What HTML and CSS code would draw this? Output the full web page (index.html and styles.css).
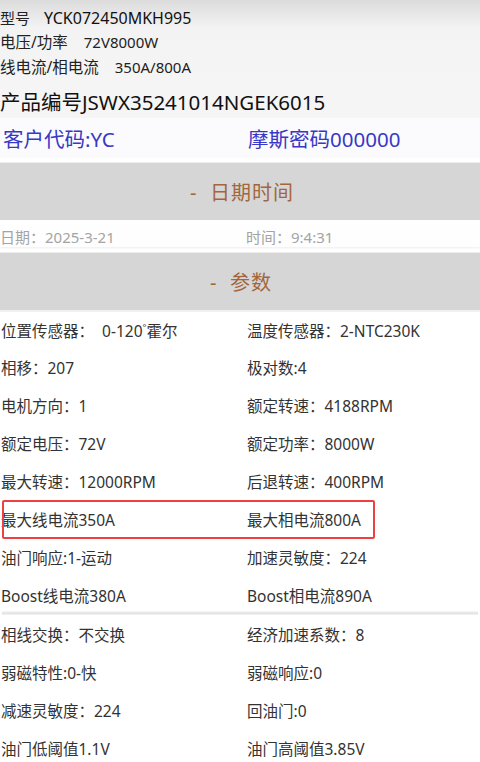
FILE: index.html
```html
<!DOCTYPE html>
<html lang="zh">
<head>
<meta charset="utf-8">
<link rel="stylesheet" href="styles.css">
</head>
<body>
<div class="page">
  <section class="top">
    <div class="line l1"><span class="lab lab1">型号</span><span class="val">YCK072450MKH995</span></div>
    <div class="line"><span class="lab">电压/功率</span><span>72V8000W</span></div>
    <div class="line"><span class="lab lab3">线电流/相电流</span><span>350A/800A</span></div>
  </section>
  <div class="product">产品编号JSWX35241014NGEK6015</div>
  <div class="customer">
    <span class="col">客户代码:YC</span>
    <span class="col">摩斯密码000000</span>
  </div>
  <div class="bar">-&nbsp;&nbsp;日期时间</div>
  <div class="date">
    <span class="col">日期：2025-3-21</span>
    <span class="col">时间：9:4:31</span>
  </div>
  <div class="bar bar2">-&nbsp;&nbsp;参数</div>
  <div class="group first">
    <div class="row"><span class="col">位置传感器：&nbsp;&nbsp;0-120<sup class="deg">°</sup>霍尔</span><span class="col">温度传感器：2-NTC230K</span></div>
    <div class="row"><span class="col">相移：207</span><span class="col">极对数:4</span></div>
    <div class="row"><span class="col">电机方向：1</span><span class="col">额定转速：4188RPM</span></div>
    <div class="row"><span class="col">额定电压：72V</span><span class="col">额定功率：8000W</span></div>
    <div class="row"><span class="col">最大转速：12000RPM</span><span class="col">后退转速：400RPM</span></div>
    <div class="row marked"><span class="col">最大线电流350A</span><span class="col">最大相电流800A</span><span class="mark"></span></div>
    <div class="row"><span class="col">油门响应:1-运动</span><span class="col">加速灵敏度：224</span></div>
    <div class="row"><span class="col">Boost线电流380A</span><span class="col">Boost相电流890A</span></div>
  </div>
  <div class="divider"></div>
  <div class="group">
    <div class="row"><span class="col">相线交换：不交换</span><span class="col">经济加速系数：8</span></div>
    <div class="row"><span class="col">弱磁特性:0-快</span><span class="col">弱磁响应:0</span></div>
    <div class="row"><span class="col">减速灵敏度：224</span><span class="col">回油门:0</span></div>
    <div class="row"><span class="col">油门低阈值1.1V</span><span class="col">油门高阈值3.85V</span></div>
  </div>
</div>
</body>
</html>
```
FILE: styles.css
```css
* { box-sizing: border-box; }
html, body { margin: 0; padding: 0; }
body {
  background: #ffffff;
  font-family: "Noto Sans", "Noto Sans CJK SC", sans-serif;
  color: #333333;
  width: 480px;
  height: 762px;
  overflow: hidden;
}
.page { display: flex; flex-direction: column; }
.top {
  background: linear-gradient(#dcdcdc 0px, #f3f3f3 28px, #f5f5f5 100%);
  padding: 6px 0 4px 0;
  height: 86px;
}
.line {
  font-size: 15px;
  line-height: 25px;
  height: 25px;
  color: #222;
  white-space: nowrap;
  display: flex;
  align-items: center;
}
.line.l1 { line-height: 24px; height: 24px; }
.lab { margin-right: 16px; font-size: 15.5px; }
.lab1 { margin-right: 14px; font-size: 15px; }
.lab3 { margin-right: 16px; }
.val { font-size: 16px; color: #111; }
.product {
  height: 32px;
  line-height: 32px;
  font-size: 20.5px;
  color: #111;
  background: #f5f5f5;
  white-space: nowrap;
}
.customer {
  height: 40px;
  display: flex;
  align-items: center;
  background: #fbfbfd;
  font-size: 20.5px;
  color: #3838c6;
  padding-left: 3px;
}
.col { width: 246px; flex: none; white-space: nowrap; }
.customer .col:first-child { width: 245px; }
.bar {
  margin-top: 5px;
  height: 57px;
  background: #d6d6d6;
  color: #a3663c;
  font-size: 20px;
  display: flex;
  align-items: center;
  justify-content: center;
  letter-spacing: 1px;
  padding-left: 4px;
  box-shadow: 0 -1px 0 #eeeeee;
}
.bar2 { margin-top: 6px; padding-left: 2px; }
.date {
  margin-top: 5px;
  height: 22px;
  display: flex;
  align-items: center;
  font-size: 15px;
  color: #a4a4a4;
  background: #fefefe;
  box-shadow: 0 1px 2px #eeeeee;
}
.group { display: flex; flex-direction: column; }
.group.first { border-top: 2px solid #f0f0f0; }
.row {
  height: 38px;
  display: flex;
  align-items: center;
  font-size: 15.5px;
  color: #333;
  padding-left: 1px;
}
.group.first .row:first-child { height: 36px; }
.deg { font-size: 9px; vertical-align: 6px; line-height: 0; }
.marked { position: relative; }
.mark {
  position: absolute;
  left: 2px;
  top: 0px;
  width: 373px;
  height: 39px;
  border: 2px solid #ee4040;
  border-radius: 2px;
}
.divider {
  height: 4px;
  margin-top: -3px;
  background: linear-gradient(#f7f7f7, #e2e2e2 60%, #f6f6f6);
  margin-left: 2px;
  margin-right: 2px;
}
```
